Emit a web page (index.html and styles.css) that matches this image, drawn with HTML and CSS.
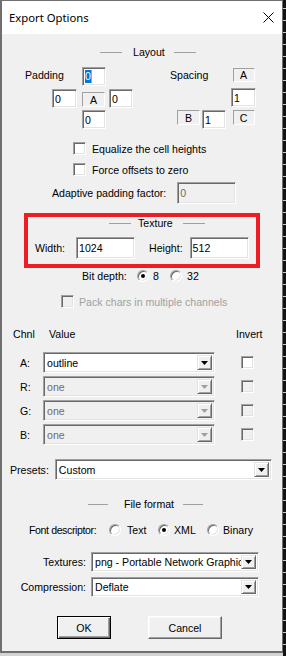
FILE: index.html
```html
<!DOCTYPE html>
<html>
<head>
<meta charset="utf-8">
<link rel="stylesheet" href="styles.css">
</head>
<body>
<div class="screen">
  <div class="window">
    <div class="titlebar">
      <span class="title">Export Options</span>
      <svg class="close" width="11" height="11" viewBox="0 0 11 11"><path d="M0.5 0.5L10.5 10.5M10.5 0.5L0.5 10.5" stroke="#000" stroke-width="1" fill="none"/></svg>
    </div>
    <div class="client">
      <div class="heading h-layout"><span class="hl"></span><span class="ht">Layout</span><span class="hl"></span></div>

      <div class="layout-block">
        <div class="pad-grid">
          <span class="pad-label">Padding</span>
          <div class="edit e-top"><span class="sel">0</span></div>
          <div class="edit e-left">0</div>
          <div class="static s-a">A</div>
          <div class="edit e-right">0</div>
          <div class="edit e-bottom">0</div>
        </div>
        <div class="sp-grid">
          <span class="sp-label">Spacing</span>
          <div class="static sa">A</div>
          <div class="edit sv">1</div>
          <div class="static sb">B</div>
          <div class="edit sh">1</div>
          <div class="static sc">C</div>
        </div>
      </div>

      <div class="chkrow c1"><span class="chk"></span><span>Equalize the cell heights</span></div>
      <div class="chkrow c2"><span class="chk"></span><span>Force offsets to zero</span></div>

      <div class="adaptive"><span>Adaptive padding factor:</span><div class="edit dis ad-edit">0</div></div>

      <div class="texture">
        <div class="heading h-tex"><span class="hl"></span><span class="ht">Texture</span><span class="hl"></span></div>
        <div class="tex-row">
          <span>Width:</span><div class="edit w-edit">1024</div>
          <span class="h-lbl">Height:</span><div class="edit h-edit">512</div>
        </div>
      </div>

      <div class="bitrow">
        <span>Bit depth:</span>
        <span class="radio on"></span><span>8</span>
        <span class="radio"></span><span>32</span>
      </div>

      <div class="chkrow packrow"><span class="chk dis"></span><span>Pack chars in multiple channels</span></div>

      <div class="chan-head">
        <span>Chnl</span><span class="vh">Value</span><span class="ih">Invert</span>
      </div>
      <div class="chan-body">
        <span class="cl">A:</span>
        <div class="combo"><span class="v">outline</span><span class="b"><svg width="7" height="4" viewBox="0 0 7 4"><path d="M0 0H7L3.5 4Z" fill="#000"/></svg></span></div>
        <span class="ci"><span class="chk"></span></span>

        <span class="cl">R:</span>
        <div class="combo dis"><span class="v">one</span><span class="b"><svg width="7" height="4" viewBox="0 0 7 4"><path d="M0 0H7L3.5 4Z" fill="#a0a0a0"/></svg></span></div>
        <span class="ci"><span class="chk dis"></span></span>

        <span class="cl">G:</span>
        <div class="combo dis"><span class="v">one</span><span class="b"><svg width="7" height="4" viewBox="0 0 7 4"><path d="M0 0H7L3.5 4Z" fill="#a0a0a0"/></svg></span></div>
        <span class="ci"><span class="chk dis"></span></span>

        <span class="cl">B:</span>
        <div class="combo dis"><span class="v">one</span><span class="b"><svg width="7" height="4" viewBox="0 0 7 4"><path d="M0 0H7L3.5 4Z" fill="#a0a0a0"/></svg></span></div>
        <span class="ci"><span class="chk dis"></span></span>
      </div>

      <div class="presets">
        <span>Presets:</span>
        <div class="combo p-combo"><span class="v">Custom</span><span class="b"><svg width="7" height="4" viewBox="0 0 7 4"><path d="M0 0H7L3.5 4Z" fill="#000"/></svg></span></div>
      </div>

      <div class="heading h-ff"><span class="hl"></span><span class="ht">File format</span><span class="hl"></span></div>

      <div class="fd">
        <span class="fd-lbl">Font descriptor:</span>
        <span class="radio"></span><span>Text</span>
        <span class="radio on"></span><span>XML</span>
        <span class="radio"></span><span>Binary</span>
      </div>

      <div class="ff">
        <span class="ff-lbl">Textures:</span>
        <div class="combo f-combo"><span class="v">png - Portable Network Graphic</span><span class="b"><svg width="7" height="4" viewBox="0 0 7 4"><path d="M0 0H7L3.5 4Z" fill="#000"/></svg></span></div>
        <span class="ff-lbl">Compression:</span>
        <div class="combo f-combo"><span class="v">Deflate</span><span class="b"><svg width="7" height="4" viewBox="0 0 7 4"><path d="M0 0H7L3.5 4Z" fill="#000"/></svg></span></div>
      </div>

      <div class="btns">
        <div class="btn ok">OK</div>
        <div class="btn cancel">Cancel</div>
      </div>
    </div>
  </div>
  <div class="desk"></div>
</div>
</body>
</html>
```

FILE: styles.css
```css
* { box-sizing: border-box; }
html, body { margin: 0; }
body {
  background: #d3d3d3;
  font-family: "Liberation Sans", Arial, sans-serif;
  font-size: 10.6px;
  line-height: 14px;
  color: #000;
}
.screen {
  display: flex;
  align-items: flex-start;
  width: 286px;
  height: 656px;
  overflow: hidden;
}
.window {
  width: 283px;
  height: 653px;
  flex: none;
  border-style: solid;
  border-color: #6f6f6f;
  border-width: 1px 1px 2px 2px;
  display: flex;
  flex-direction: column;
  background: #f0f0f0;
}
.desk {
  width: 3px;
  height: 656px;
  flex: none;
  background: repeating-linear-gradient(#141414 0 8px, #c8c8c8 8px 9px, #141414 9px 12px);
}
.titlebar {
  height: 33px;
  flex: none;
  background: #fff;
  display: flex;
  align-items: center;
  justify-content: space-between;
  padding: 0 8px 0 7px;
}
.title {
  font-family: "Noto Sans", "Open Sans", sans-serif;
  font-size: 11.3px;
  color: #000;
}
.close { display: block; }
.client {
  flex: 1;
  display: flex;
  flex-direction: column;
  align-items: flex-start;
}

/* section headings */
.heading { display: flex; align-items: center; height: 14px; }
.hl { width: 22px; height: 1px; background: #a0a0a0; flex: none; }
.h-layout { margin: 11px 0 0 98px; }
.h-layout .ht { margin: 0 9px 0 11px; }
.h-tex { height: 12px; margin-left: 74px; }
.h-tex .ht { margin: 0 10px 0 7px; }
.h-ff { margin: 17px 0 0 86px; }
.h-ff .hl { width: 20px; }
.h-ff .ht { margin: 0 9px 0 16px; }

/* common controls */
.edit {
  height: 19px;
  background: #fff;
  border: 1px solid;
  border-color: #a0a0a0 #fff #fff #a0a0a0;
  box-shadow: inset 1px 1px #696969, inset -1px -1px #e3e3e3;
  padding-left: 2px;
  display: flex;
  align-items: center;
  white-space: nowrap;
}
.edit.dis { background: #f0f0f0; color: #6d6d6d; }
.sel {
  background: #0078d7;
  color: #fff;
  border-right: 1px solid #f7931e;
  line-height: 13px;
}
.static {
  height: 15px;
  border: 1px solid;
  border-color: #a0a0a0 #fff #fff #a0a0a0;
  display: flex;
  align-items: center;
  justify-content: center;
}
.chk {
  width: 13px;
  height: 13px;
  flex: none;
  display: block;
  background: #fff;
  border: 1px solid;
  border-color: #a0a0a0 #fff #fff #a0a0a0;
  box-shadow: inset 1px 1px #696969, inset -1px -1px #e3e3e3;
}
.chk.dis { background: #f0f0f0; }
.radio {
  width: 12px;
  height: 12px;
  flex: none;
  display: block;
  position: relative;
  border-radius: 50%;
  background: #fff;
  border: 1px solid;
  border-color: #a0a0a0 #fff #fff #a0a0a0;
  box-shadow: inset 1px 1px #696969, inset -1px -1px #e3e3e3;
}
.radio.on::after {
  content: "";
  position: absolute;
  left: 3px;
  top: 3px;
  width: 4px;
  height: 4px;
  border-radius: 50%;
  background: #000;
}
.combo {
  height: 21px;
  display: flex;
  align-items: stretch;
  background: #fff;
  border: 1px solid;
  border-color: #a0a0a0 #fff #fff #a0a0a0;
  box-shadow: inset 1px 1px #696969, inset -1px -1px #e3e3e3;
  padding: 2px;
}
.combo .v {
  flex: 1;
  min-width: 0;
  display: flex;
  align-items: center;
  padding-left: 1px;
  overflow: hidden;
  white-space: nowrap;
}
.combo .b {
  width: 15px;
  flex: none;
  background: #f0f0f0;
  border: 1px solid;
  border-color: #e3e3e3 #696969 #696969 #e3e3e3;
  box-shadow: inset 1px 1px #fff, inset -1px -1px #a0a0a0;
  display: flex;
  align-items: center;
  justify-content: center;
}
.combo .b svg { display: block; }
.combo.dis { background: #f0f0f0; color: #6d6d6d; }

/* layout block */
.layout-block { display: flex; margin: 8px 0 0 23px; }
.pad-grid {
  display: grid;
  grid-template-columns: 27px 25px 5px 24px 3px 24px;
  grid-template-rows: 22px 21px 19px;
}
.sp-grid {
  margin-left: 37px;
  display: grid;
  grid-template-columns: 7px 23px 2px 24px 5px 25px;
  grid-template-rows: 22px 21px 19px;
}
.pad-label { grid-area: 1 / 1 / 2 / 4; margin-top: 1px; }
.e-top { grid-area: 1 / 4; }
.e-left { grid-area: 2 / 2; }
.s-a { grid-area: 2 / 4; width: 23px; align-self: center; }
.e-right { grid-area: 2 / 6; }
.e-bottom { grid-area: 3 / 4; }
.sp-label { grid-area: 1 / 1 / 2 / 6; margin-top: 1px; }
.sa { grid-area: 1 / 6; width: 22px; height: 14px; justify-self: center; margin-top: 1px; }
.sv { grid-area: 2 / 6; margin-top: -1px; }
.sb { grid-area: 3 / 2; }
.sh { grid-area: 3 / 4; }
.sc { grid-area: 3 / 6; width: 22px; justify-self: center; }

/* checkboxes */
.chkrow { display: flex; align-items: center; gap: 6px; height: 13px; }
.c1 { margin: 13px 0 0 71px; }
.c2 { margin: 8px 0 0 71px; }

.adaptive { display: flex; align-items: center; gap: 11px; margin: 6px 0 0 50px; }
.ad-edit { width: 59px; height: 22px; }

/* texture box */
.texture {
  margin: 9px 0 0 22px;
  width: 236px;
  border: 4px solid #ee1c25;
  padding: 0 0 5px 7px;
}
.tex-row { display: flex; align-items: center; margin-top: 8px; }
.w-edit { margin-left: 11px; width: 59px; height: 22px; }
.h-lbl { margin-left: 14px; }
.h-edit { margin-left: 7px; width: 59px; height: 22px; }

.bitrow {
  display: grid;
  grid-template-columns: 55px 16px 17px 17px auto;
  align-items: center;
  height: 14px;
  margin: 1px 0 0 80px;
}

.packrow { margin: 12px 0 0 59px; gap: 5px; color: #a0a0a0; }

/* channels */
.chan-head {
  display: grid;
  grid-template-columns: 30px 172px 50px;
  margin: 19px 0 0 11px;
  height: 14px;
}
.vh { padding-left: 6px; }
.ih { padding-left: 21px; }
.chan-body {
  display: grid;
  grid-template-columns: 30px 172px 50px;
  grid-auto-rows: 21px;
  row-gap: 3px;
  align-items: center;
  margin: 11px 0 0 11px;
}
.cl { padding-left: 7px; }
.ci { padding-left: 26px; display: flex; }

.presets { display: flex; align-items: center; gap: 6px; margin: 14px 0 0 8px; }
.p-combo { width: 217px; }

.fd {
  display: grid;
  grid-template-columns: 80px 18px 31px 16px 33px 16px auto;
  align-items: center;
  height: 14px;
  margin: 12px 0 0 27px;
}
.fd-lbl { letter-spacing: -0.4px; white-space: nowrap; }

.ff {
  display: grid;
  grid-template-columns: 84px 168px;
  column-gap: 5px;
  grid-auto-rows: 20px;
  row-gap: 5px;
  align-items: center;
  margin-top: 15px;
}
.ff-lbl { justify-self: end; }
.f-combo { height: 20px; }

.btns { display: flex; gap: 37px; margin: 19px 0 0 55px; }
.btn {
  height: 23px;
  display: flex;
  align-items: center;
  justify-content: center;
  background: #f0f0f0;
  border: 1px solid;
  border-color: #fff #696969 #696969 #fff;
  box-shadow: inset -1px -1px #a0a0a0, inset 1px 1px #f8f8f8;
}
.ok {
  width: 54px;
  border-color: #000;
  box-shadow: inset 1px 1px #fff, inset -1px -1px #696969, inset -2px -2px #a0a0a0;
}
.cancel { width: 74px; }
```
